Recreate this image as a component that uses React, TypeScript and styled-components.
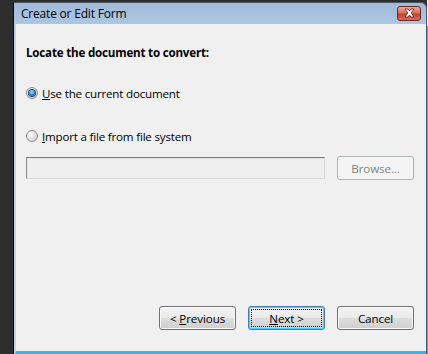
import React from 'react';
import styled, { createGlobalStyle } from 'styled-components';

const GlobalStyle = createGlobalStyle`
html, body {
  margin: 0;
  padding: 0;
  background: #2d2d2d;
  width: 428px;
  height: 354px;
  overflow: hidden;
}
`;

const Desktop = styled.div`
width: 428px;
height: 354px;
display: flex;
padding-top: 2px;
box-sizing: border-box;
`;

const LeftStrip = styled.div`
width: 13px;
flex: none;
`;

const RightStrip = styled.div`
width: 3px;
flex: none;
margin-top: -2px;
background: linear-gradient(#f0f0f0 26px, #36b6e0 26px);
`;

const Window = styled.div`
flex: 1;
display: flex;
flex-direction: column;
border-left: 1px solid #0b0b0b;
border-top: 1px solid #4a5866;
border-right: 1px solid #4a5866;
border-top-right-radius: 6px;
background: linear-gradient(#a0bad9, #b9d1ea 40px);
font-family: 'Open Sans', 'Noto Sans', sans-serif;
color: #000;
`;

const TitleBar = styled.div`
height: 21px;
display: flex;
align-items: center;
justify-content: space-between;
padding: 0 5px 0 7px;
`;

const Title = styled.span`
font-size: 12px;
letter-spacing: -0.2px;
color: #000;
`;

const CloseButton = styled.div`
width: 24px;
height: 15px;
box-sizing: border-box;
border: 1px solid #6b2a22;
border-radius: 3px;
background: linear-gradient(#eaa89a, #d8705f 45%, #c4402d 55%, #d2705a);
display: flex;
align-items: center;
justify-content: center;
margin-top: -1px;
`;

const Body = styled.div`
flex: 1;
margin-left: 1px;
border-left: 1px solid #c3d4e8;
background: #f0f0f0;
padding: 21px 12px 0 10px;
display: flex;
flex-direction: column;
border-bottom: 3px solid #36b6e0;
`;

const Heading = styled.div`
font-size: 11.6px;
font-weight: bold;
letter-spacing: -0.2px;
height: 16px;
line-height: 16px;
`;

const RadioRow = styled.label<{ $top: number }>`
display: flex;
align-items: center;
gap: 4px;
font-size: 11.6px;
letter-spacing: -0.2px;
margin-top: ${(p) => p.$top}px;
height: 16px;
`;

const RadioDot = styled.span<{ $checked?: boolean }>`
width: 12px;
height: 12px;
border-radius: 50%;
box-sizing: border-box;
border: 1px solid #8e8f8f;
background: radial-gradient(circle at 35% 35%, #fbfbfb, #d6d6d6 70%, #c8c8c8);
display: flex;
align-items: center;
justify-content: center;
&::after {
  content: '';
  display: ${(p) => (p.$checked ? 'block' : 'none')};
  width: 6px;
  height: 6px;
  border-radius: 50%;
  background: radial-gradient(circle at 45% 35%, #a4e0fb, #2a86cc 55%, #0d4a84);
  box-shadow: 0 0 0 1px #1f4f7a;
}
`;

const Underline = styled.span`
text-decoration: underline;
`;

const FileRow = styled.div`
display: flex;
align-items: center;
margin-top: 12px;
gap: 12px;
`;

const FileInput = styled.div`
width: 299px;
height: 22px;
box-sizing: border-box;
border: 1px solid #d8d8d8;
border-top-color: #7a7a7a;
border-left-color: #8a8a8a;
background: #efefef;
box-shadow: inset 1px 1px 0 #e3e3e3;
`;

const Button = styled.div<{ $disabled?: boolean; $focus?: boolean }>`
width: 77px;
height: 24px;
box-sizing: border-box;
border-radius: 3px;
border: 1px solid ${(p) => (p.$disabled ? '#adb2b5' : p.$focus ? '#3c7fb1' : '#707070')};
background: ${(p) =>
  p.$disabled
    ? '#f4f4f4'
    : 'linear-gradient(#f2f2f2, #ebebeb 48%, #dddddd 52%, #cfcfcf)'};
color: ${(p) => (p.$disabled ? '#838383' : '#000')};
font-size: 11.6px;
letter-spacing: -0.1px;
display: flex;
align-items: center;
justify-content: center;
position: relative;
box-shadow: ${(p) => (p.$focus ? 'inset 0 0 0 1px #48d4f8' : 'inset 0 0 0 1px #f8f8f8')};
`;

const FocusRing = styled.span`
position: absolute;
inset: 2px;
border: 1px dotted #000;
`;

const Spacer = styled.div`
flex: 1;
`;

const Footer = styled.div`
display: flex;
justify-content: flex-end;
gap: 12px;
padding-bottom: 21px;
`;

const CloseX = () => (
  <svg width="13" height="10" viewBox="0 0 13 10">
    <path
      d="M2 1 L5 1 L6.5 3 L8 1 L11 1 L8.2 5 L11 9 L8 9 L6.5 7 L5 9 L2 9 L4.8 5 Z"
      fill="#fff"
      stroke="#5a2018"
      strokeWidth="0.8"
      strokeLinejoin="round"
    />
  </svg>
);

export default function App() {
  return (
    <>
      <GlobalStyle />
      <Desktop>
        <LeftStrip />
        <Window>
          <TitleBar>
            <Title>Create or Edit Form</Title>
            <CloseButton>
              <CloseX />
            </CloseButton>
          </TitleBar>
          <Body>
            <Heading>Locate the document to convert:</Heading>
            <RadioRow $top={24}>
              <RadioDot $checked />
              <span>
                <Underline>U</Underline>se the current document
              </span>
            </RadioRow>
            <RadioRow $top={27}>
              <RadioDot />
              <span>
                <Underline>I</Underline>mport a file from file system
              </span>
            </RadioRow>
            <FileRow>
              <FileInput />
              <Button $disabled>Browse...</Button>
            </FileRow>
            <Spacer />
            <Footer>
              <Button>
                &lt;&nbsp;<Underline>P</Underline>revious
              </Button>
              <Button $focus>
                <FocusRing />
                <Underline>N</Underline>ext &gt;
              </Button>
              <Button>Cancel</Button>
            </Footer>
          </Body>
        </Window>
        <RightStrip />
      </Desktop>
    </>
  );
}
